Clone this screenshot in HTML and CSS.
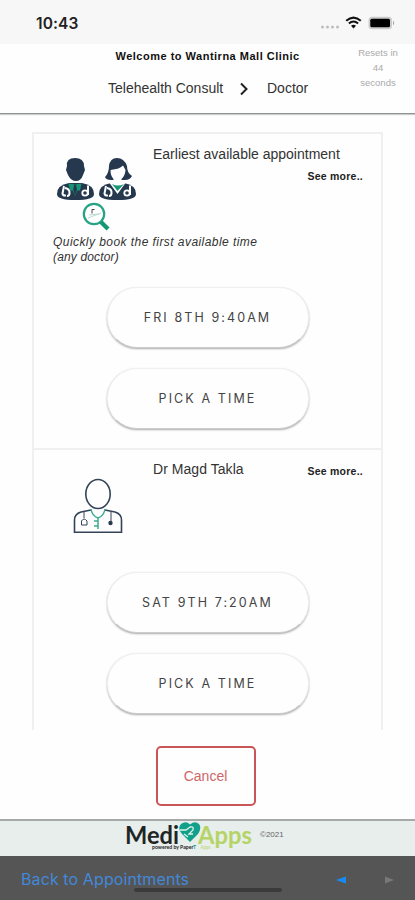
FILE: index.html
```html
<!DOCTYPE html>
<html lang="en">
<head>
<meta charset="utf-8">
<title>Welcome to Wantirna Mall Clinic</title>
<link rel="stylesheet" href="styles.css">
</head>
<body>
<div class="screen">
  <div class="status">
    <span class="clock">10:43</span>
    <svg class="status-icons" width="76" height="18" viewBox="0 0 76 18">
      <g fill="#bdbdbd"><circle cx="2.5" cy="13" r="1.5"/><circle cx="7.5" cy="13" r="1.5"/><circle cx="12.5" cy="13" r="1.5"/><circle cx="17.5" cy="13" r="1.5"/></g>
      <g fill="none" stroke="#111" stroke-width="2.1"><path d="M26.2 6.8Q33.500 0.300 40.800 6.800"/><path d="M28.900 9.500Q33.500 5.500 38.100 9.500"/></g>
      <path d="M31 11.700Q33.500 9.700 36 11.700L33.500 14.500Z" fill="#111"/>
      <rect x="48.500" y="2.700" width="23.500" height="12.600" rx="3.500" fill="#ccc"/>
      <rect x="50.300" y="4.700" width="19.700" height="8.600" rx="1.500" fill="#000"/>
      <path d="M73 6.500v5q2-2.500 0-5z" fill="#999"/>
    </svg>
  </div>

  <header class="header">
    <div class="heading">
      <h1>Welcome to Wantirna Mall Clinic</h1>
      <div class="crumbs">
        <span class="crumb-first">Telehealth Consult</span>
        <svg width="10" height="14" viewBox="0 0 10 14"><path d="M2 1.500L7.500 7 2 12.500" fill="none" stroke="#222" stroke-width="2"/></svg>
        <span class="crumb-last">Doctor</span>
      </div>
    </div>
    <div class="timer">Resets in<br>44<br>seconds</div>
  </header>

  <main class="list">
    <section class="card">
      <div class="card-top">
        <svg class="pair" width="84" height="75" viewBox="0 0 84 75">
          <defs>
            <g id="coat">
              <path d="M1 36Q1 27 13 25H26Q38 27 38 36Q38 42 19.500 42Q1 42 1 36Z" fill="#25384e"/>
              <path d="M8 28L6.500 35.500Q7 38 10 37.500M9 30Q14 31 13.500 35Q13.500 38 11 38M32 27.500V37" fill="none" stroke="#fff" stroke-width="2"/>
              <circle cx="29" cy="35" r="2.700" fill="#25384e" stroke="#fff" stroke-width="1.800"/>
            </g>
          </defs>
          <use href="#coat"/>
          <path d="M12.500 25.500L19 26.500L25.500 25.500L24 32.500H21.500L19 38L16.500 32.500L14 32.500Z" fill="#159776"/>
          <path d="M18.200 26.500h1.800l1 5.500-2 6-1.800-6z" fill="#25384e"/>
          <path d="M11 8Q10 0 19 0T28 8l1 4-2 5Q25 23 20 23T12 17l-2-5z" fill="#25384e"/>
          <use href="#coat" x="42"/>
          <path d="M49 19Q53 15 53 8Q54 0 61 0T71 8Q71 15 76 18Q74 22 69 22H55Q50 22 49 19Z" fill="#25384e"/>
          <path d="M54.500 12Q64 11 67 7.500L69.500 12Q69 18 65.500 21V25H57.500V21Q54.500 18 54.500 12Z" fill="#fff"/>
          <path d="M53.500 25h16l-8 11z" fill="#fff"/>
          <path d="M56 26q6 3 12 0l-6.500 7z" fill="#159776"/>
          <circle cx="38" cy="56" r="10.200" fill="#fff" stroke="#26a285" stroke-width="2.200"/>
          <path d="M45 64l7 7" stroke="#159776" stroke-width="4.200"/>
          <path d="M32 60l13-5M33 57l10-1" stroke="#a8d0c5" stroke-width=".8" fill="none"/>
          <path d="M36 51.500v4m0-4h2.500" stroke="#444" fill="none"/>
        </svg>
        <div class="info">
          <h2>Earliest available appointment</h2>
          <a class="more">See more..</a>
        </div>
      </div>
      <p class="note"><span class="note-one">Quickly book the first available time</span><br><span>(any doctor)</span></p>
      <div class="actions">
        <button>FRI 8TH 9:40AM</button>
        <button>PICK A TIME</button>
      </div>
    </section>

    <section class="card second">
      <div class="card-top">
        <svg class="doctor" width="50" height="58" viewBox="0 0 50 58">
          <g fill="none" stroke="#344359" stroke-width="1.600">
            <ellipse cx="25" cy="16" rx="12.200" ry="14.500"/>
            <path d="M18 32L8 34Q1.500 36 1.500 42V54.200H48.500V42Q48.500 36 42 34L32 32"/>
            <path d="M11 34v6M8.500 47v-4q2.500-4 5.500 0v4zM38 34v9" stroke-width="1"/>
          </g>
          <circle cx="37.500" cy="45" r="2.200" fill="#293a50"/>
          <path d="M18 31Q19 38 25 40Q31 38 32 31M25 40v11M21 43h4m-4 5h4" fill="none" stroke="#3cac8f" stroke-width="1.500"/>
        </svg>
        <div class="info row">
          <h2>Dr Magd Takla</h2>
          <a class="more">See more..</a>
        </div>
      </div>
      <div class="actions">
        <button>SAT 9TH 7:20AM</button>
        <button>PICK A TIME</button>
      </div>
    </section>
  </main>

  <div class="cancel-row"><button class="cancel">Cancel</button></div>

  <footer class="brand">
    <svg class="logo" width="128" height="35" viewBox="0 0 128 35">
      <g class="logo-word">
        <text x="-1" y="22.500" textLength="54" lengthAdjust="spacingAndGlyphs" fill="#1e2524">Medi</text>
        <text x="72" y="22.500" textLength="54" lengthAdjust="spacingAndGlyphs" fill="#b5d465">Apps</text>
      </g>
      <path d="M64 21L56 13Q51 7 55 3Q60-.5 64 3.500Q69-.5 73 3Q76 7 72 13Z" fill="#12a08a"/>
      <path d="M54 9h6l4-3q4-1 3 3l-4 4h4M58 13l4 3" fill="none" stroke="#dff3ed" stroke-width="1.300"/>
      <g class="logo-small">
        <text x="26" y="27.500" textLength="44" lengthAdjust="spacingAndGlyphs" fill="#222">powered by Paper<tspan fill="#12a08a">T</tspan></text>
        <text x="74.500" y="27.500" textLength="10" lengthAdjust="spacingAndGlyphs" fill="#c3dc86">Apps</text>
      </g>
    </svg>
    <span class="year">©2021</span>
  </footer>

  <nav class="toolbar">
    <a class="back">Back to Appointments</a>
    <svg width="60" height="10" viewBox="0 0 60 10"><path d="M1 5L11 1.500V8.500Z" fill="#168bf8"/><path d="M59 5L50 1.500V8.500Z" fill="#777"/></svg>
    <i class="home"></i>
  </nav>
</div>
</body>
</html>
```
FILE: styles.css
```css
* { box-sizing: border-box; }
body { margin: 0; background: #fefefe; font-family: "Liberation Sans", Arial, sans-serif; color: #333; }
h1, h2, p { margin: 0; font-weight: normal; }
svg { display: block; flex: none; }
button { font: inherit; background: #fefefe; padding: 0; }
.screen { width: 415px; height: 900px; display: flex; flex-direction: column; overflow: hidden; white-space: nowrap; }

.status { height: 44px; flex: none; background: #f7f7f7; display: flex; justify-content: space-between; padding: 14px 19px 0 36px; }
.clock { font: 600 15.5px/19px Inter, sans-serif; color: #222; letter-spacing: .1px; }

.header { height: 70px; flex: none; display: flex; border-bottom: 1px solid #8f9593; box-shadow: 0 1px 1px #ccc; }
.heading { width: 341px; }
h1 { font-size: 11px; font-weight: bold; line-height: 14px; padding: 5px 0 0 115.5px; color: #111; letter-spacing: .5px; }
.crumbs { display: flex; align-items: center; padding: 16px 0 0 108px; font-size: 14px; line-height: 18px; }
.crumbs svg { margin: 2px 18px 0 16px; }
.crumb-first { width: 115px; }
.timer { width: 74px; text-align: center; padding: 1px 0 0; font-size: 9.5px; line-height: 15px; color: #aaa; }

.list { width: 351px; height: 598px; flex: none; margin: 18px 0 0 32px; border: 2px solid #f0f0f0; border-bottom: 0; }
.card { height: 316px; border-bottom: 2px solid #f0f0f0; }
.card.second { height: 280px; border: 0; }
.card-top { display: flex; padding: 12px 18px 0 22px; height: 100px; }
.pair { margin-top: 12px; }
.info { flex: 1; margin-left: 13px; display: flex; flex-direction: column; }
h2 { font-size: 14px; line-height: 17px; }
.more { font-size: 10.5px; font-weight: bold; line-height: 14px; margin-top: 6px; color: #222; align-self: flex-end; letter-spacing: .25px; }
.info.row { flex-direction: row; justify-content: space-between; margin-left: 30px; }
.row h2 { margin-top: -1px; letter-spacing: .05px; }
.row .more { align-self: flex-start; margin-top: 2px; }
.doctor { margin: 16px 0 0 17px; }
.note { font-size: 12px; font-style: italic; line-height: 15px; padding: 1px 0 0 19px; letter-spacing: .15px; }
.note-one { letter-spacing: .44px; }
.actions { display: flex; flex-direction: column; align-items: center; gap: 20px; padding-top: 22px; }
.second .actions { padding-top: 22px; }
.actions button { width: 202px; height: 61px; border: 1px solid #f0f0f0; border-bottom-color: #ccc; border-radius: 30px; box-shadow: 0 1px 2px #aaa; font: 12.5px Inter, "Liberation Sans", sans-serif; letter-spacing: 2.1px; color: #444; }

.cancel-row { padding: 16px 0 0 155.5px; height: 89px; flex: none; }
.cancel { width: 100px; height: 60px; border: 2px solid #c95556; border-radius: 5px; color: #cd6668; font-size: 14px; }

.brand { height: 37px; flex: none; background: #e7eeec; border-top: 2px solid #a5a9a8; display: flex; padding-left: 126px; }
.logo-word { font: bold 24px Lato, sans-serif; }
.logo-small { font: bold 5px Lato, sans-serif; }
.year { font-size: 8px; line-height: 10px; margin: 9px 0 0 6px; color: #666; }

.toolbar { height: 44px; flex: none; background: #555; position: relative; display: flex; justify-content: space-between; padding: 13px 20px 0 21px; }
.back { font: 16px/20px Inter, sans-serif; color: #4388d8; letter-spacing: .1px; }
.toolbar svg { margin-top: 6px; }
.home { position: absolute; left: 134px; top: 32px; width: 148px; height: 4px; border-radius: 2px; background: #3b3b3b; }
```
